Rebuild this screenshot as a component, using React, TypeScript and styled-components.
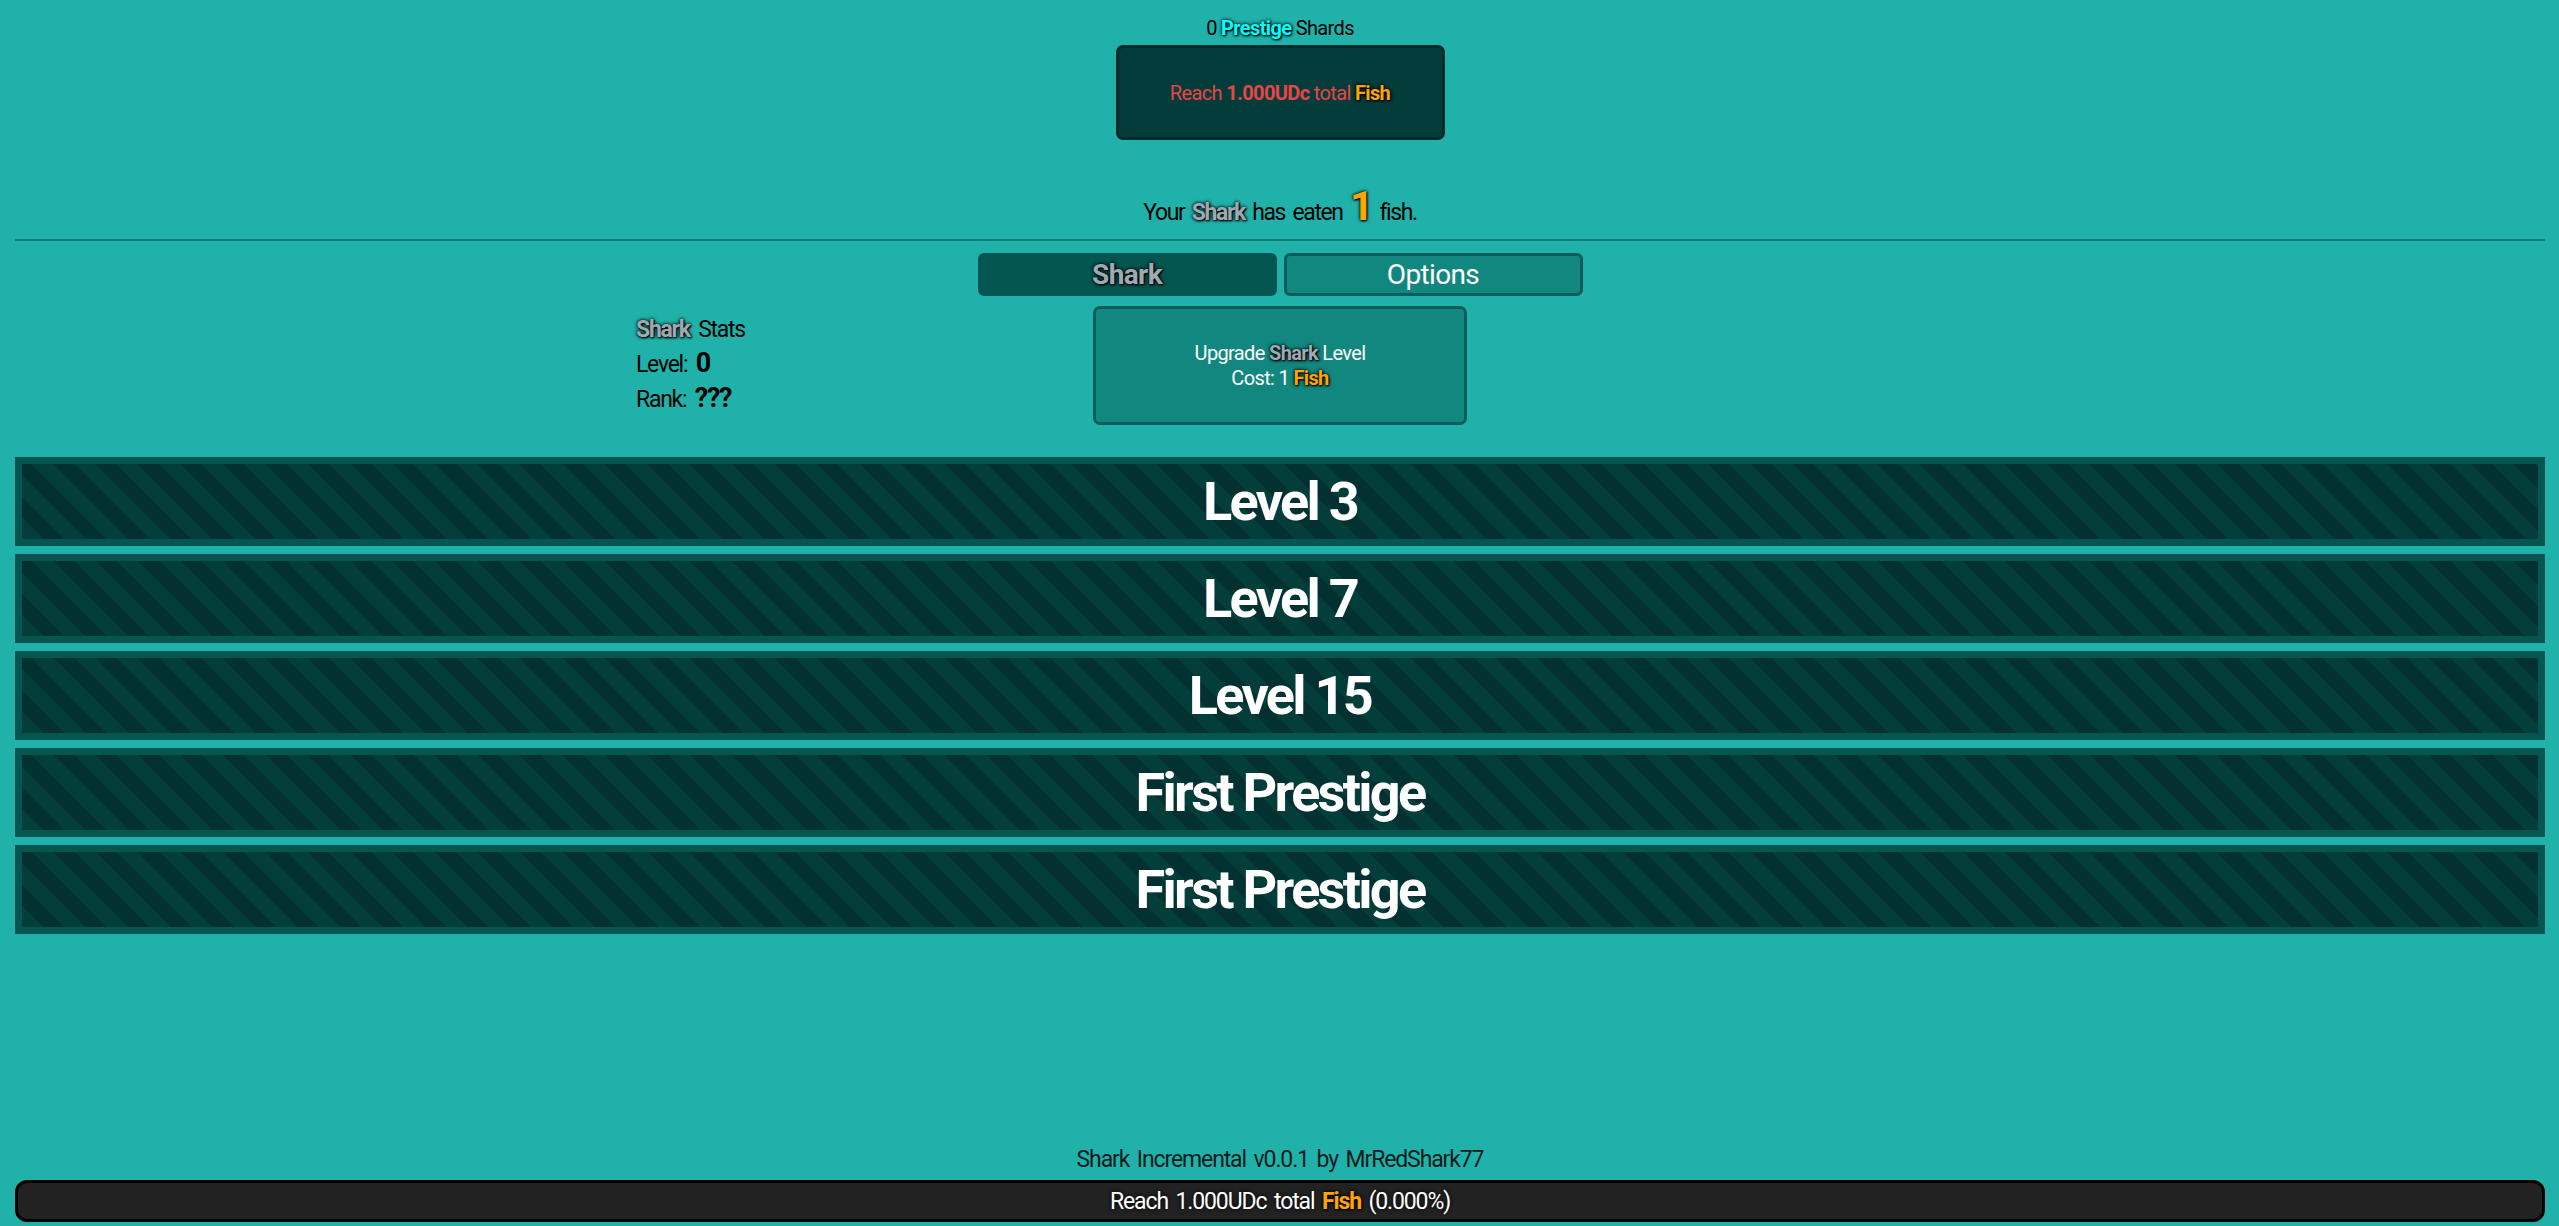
import React from "react"
import styled, { createGlobalStyle } from "styled-components"

const GlobalStyle = createGlobalStyle`
  html, body {
    margin: 0;
    padding: 0;
  }

  body {
    background: #20b2aa;
    color: #000;
    font-family: Roboto, "Noto Sans", sans-serif;
    letter-spacing: -0.04em;
  }
`

const glow = "1px 1px 2px #000, 0 0 3px #000, 0 0 4px rgba(0, 0, 0, 0.6)"

const Page = styled.div`
  min-height: 100vh;
  box-sizing: border-box;
  display: flex;
  flex-direction: column;
  padding: 17px 14px 4px 15px;
`

const Header = styled.div`
  display: flex;
  flex-direction: column;
  align-items: center;
`

const ShardsLine = styled.div`
  font-size: 20px;
  line-height: 23px;
`

const GoalBox = styled.div`
  margin-top: 5px;
  width: 329px;
  height: 95px;
  box-sizing: border-box;
  display: flex;
  align-items: center;
  justify-content: center;
  background: #033c3a;
  border: 3px solid #022c2b;
  border-radius: 7px;
  color: #e84545;
  font-size: 20px;
`

const Prestige = styled.b`
  color: #00ffff;
  text-shadow: ${glow};
`

const SharkName = styled.b`
  color: #9fa9b2;
  text-shadow: ${glow};
`

const Fish = styled.b`
  color: #ffa500;
  text-shadow: ${glow};
`

const Strong = styled.b<{ $size?: number }>`
  font-size: ${p => (p.$size ? `${p.$size}px` : "inherit")};
  line-height: 1;
`

const EatenLine = styled.div`
  margin-top: 46px;
  text-align: center;
  font-size: 23px;
  line-height: 46px;
  letter-spacing: -0.06em;
  word-spacing: 3px;
`

const BigNumber = styled.b`
  font-size: 41px;
  line-height: 1;
  color: #ffa500;
  text-shadow: ${glow};
`

const Divider = styled.div`
  margin-top: 3px;
  height: 2px;
  background: #0d7f79;
`

const Tabs = styled.div`
  margin-top: 12px;
  display: flex;
  justify-content: center;
  gap: 7px;
`

const Tab = styled.div<{ $active?: boolean }>`
  width: 299px;
  height: 43px;
  box-sizing: border-box;
  display: flex;
  align-items: center;
  justify-content: center;
  border-radius: 6px;
  border: 3px solid ${p => (p.$active ? "#055550" : "#0a5d58")};
  background: ${p => (p.$active ? "#055550" : "#12877f")};
  color: ${p => (p.$active ? "#9fa9b2" : "#fff")};
  font-size: 28px;
  font-weight: ${p => (p.$active ? 700 : 400)};
  text-shadow: ${p => (p.$active ? glow : "none")};
`

const MainRow = styled.div`
  margin-top: 10px;
  display: grid;
  grid-template-columns: 1fr 374px 1fr;
`

const Stats = styled.div`
  justify-self: end;
  width: 457px;
  padding-top: 6px;
  font-size: 23px;
  line-height: 35px;
  letter-spacing: -0.055em;
  word-spacing: 4px;
`

const UpgradeButton = styled.div`
  height: 119px;
  box-sizing: border-box;
  display: flex;
  flex-direction: column;
  align-items: center;
  justify-content: center;
  background: #12877f;
  border: 3px solid #0a5d58;
  border-radius: 7px;
  color: #fff;
  font-size: 20px;
  line-height: 25px;
`

const Milestones = styled.div`
  margin-top: 32px;
  display: flex;
  flex-direction: column;
  gap: 8px;
`

const MilestoneBar = styled.div`
  height: 89px;
  box-sizing: border-box;
  display: flex;
  align-items: center;
  justify-content: center;
  border: 7px solid #065550;
  background: repeating-linear-gradient(
    45deg,
    #043e3b 0px,
    #043e3b 15px,
    #033030 15px,
    #033030 30px
  );
  color: #fff;
  font-size: 54px;
  font-weight: 700;
  letter-spacing: -0.05em;
`

const Footer = styled.div`
  margin-top: auto;
  display: flex;
  flex-direction: column;
  gap: 6px;
  letter-spacing: -0.07em;
  word-spacing: 3px;
`

const Credits = styled.div`
  text-align: center;
  font-size: 23px;
  line-height: 28px;
  color: #0b1b1b;
`

const GoalBar = styled.div`
  height: 42px;
  box-sizing: border-box;
  display: flex;
  align-items: center;
  justify-content: center;
  background: #222;
  border: 3px solid #000;
  border-radius: 12px;
  color: #fff;
  font-size: 23px;
  text-shadow: 0 0 4px #000;
`

const milestones = ["Level 3", "Level 7", "Level 15", "First Prestige", "First Prestige"]

export default function App() {
  return (
    <>
      <GlobalStyle />
      <Page>
        <Header>
          <ShardsLine>
            0 <Prestige>Prestige</Prestige> Shards
          </ShardsLine>
          <GoalBox>
            <span>
              Reach <Strong>1.000UDc</Strong> total <Fish>Fish</Fish>
            </span>
          </GoalBox>
        </Header>
        <EatenLine>
          Your <SharkName>Shark</SharkName> has eaten <BigNumber>1</BigNumber> fish.
        </EatenLine>
        <Divider />
        <Tabs>
          <Tab $active>Shark</Tab>
          <Tab>Options</Tab>
        </Tabs>
        <MainRow>
          <Stats>
            <div>
              <SharkName>Shark</SharkName> Stats
            </div>
            <div>
              Level: <Strong $size={27}>0</Strong>
            </div>
            <div>
              Rank: <Strong $size={27}>???</Strong>
            </div>
          </Stats>
          <UpgradeButton>
            <div>
              Upgrade <SharkName>Shark</SharkName> Level
            </div>
            <div>
              Cost: 1 <Fish>Fish</Fish>
            </div>
          </UpgradeButton>
        </MainRow>
        <Milestones>
          {milestones.map((m, i) => (
            <MilestoneBar key={i}>{m}</MilestoneBar>
          ))}
        </Milestones>
        <Footer>
          <Credits>Shark Incremental v0.0.1 by MrRedShark77</Credits>
          <GoalBar>
            <span>
              Reach 1.000UDc total <Fish>Fish</Fish> (0.000%)
            </span>
          </GoalBar>
        </Footer>
      </Page>
    </>
  )
}
